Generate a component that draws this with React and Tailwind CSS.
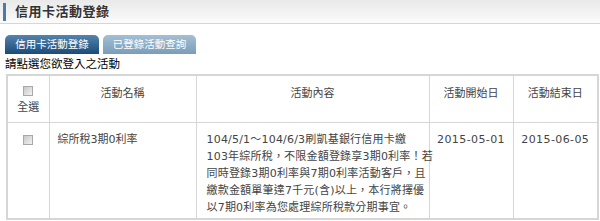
import React from 'react';

function Box() {
  return (
    <span className="inline-block w-[10px] h-[10px] border border-[#a8a8a8] bg-gradient-to-br from-[#c8c8c8] to-[#f2f2f2] align-middle" />
  );
}

const LINES = [
  '104/5/1～104/6/3刷凱基銀行信用卡繳',
  '103年綜所稅，不限金額登錄享3期0利率！若',
  '同時登錄3期0利率與7期0利率活動客戶，且',
  '繳款金額單筆達7千元(含)以上，本行將擇優',
  '以7期0利率為您處理綜所稅款分期事宜。',
];

export default function App() {
  return (
    <div className="w-[600px] h-[221px] bg-white overflow-hidden font-['DejaVu_Sans','Noto_Sans_CJK_TC',sans-serif]">
      {/* page title */}
      <div className="h-[24px] flex items-center border-b border-[#d6d6d6] bg-gradient-to-b from-[#e9e9e9] to-[#fbfbfb]">
        <div className="ml-[3px] w-[3px] h-[18px] bg-[#4d7ba6]" />
        <div className="ml-[9px] text-[13px] tracking-[0.5px] font-bold text-[#333]">信用卡活動登錄</div>
      </div>

      {/* tabs */}
      <div className="mt-[11px] ml-[5px] flex gap-[4px]">
        <div className="w-[94px] h-[19px] rounded-t-[5px] bg-gradient-to-b from-[#5484ad] to-[#1d4b78] flex items-center justify-center text-white text-[10.5px]">
          信用卡活動登錄
        </div>
        <div className="w-[93px] h-[19px] rounded-t-[5px] bg-gradient-to-b from-[#a3bfd3] to-[#7b9dba] flex items-center justify-center text-white text-[10.5px]">
          已登錄活動查詢
        </div>
      </div>

      <div className="ml-[5px] mt-[2px] h-[17px] leading-[17px] text-[11.5px] text-black">請點選您欲登入之活動</div>

      {/* table */}
      <table className="ml-[6px] mt-[1px] w-[591px] border-collapse table-fixed border-2 border-[#d6d6d6] text-[11px] text-[#444]">
        <colgroup>
          <col className="w-[42px]" />
          <col className="w-[147px]" />
          <col className="w-[233px]" />
          <col className="w-[84px]" />
          <col className="w-[85px]" />
        </colgroup>
        <thead>
          <tr className="h-[47px]">
            <th className="border border-[#d6d6d6] align-middle font-normal pt-[3px]">
              <div className="flex flex-col items-center gap-[5px]">
                <Box />
                <span className="leading-[14px]">全選</span>
              </div>
            </th>
            <th className="border border-[#d6d6d6] align-top font-normal pt-[10px] leading-[16px]">活動名稱</th>
            <th className="border border-[#d6d6d6] align-top font-normal pt-[10px] leading-[16px]">活動內容</th>
            <th className="border border-[#d6d6d6] align-top font-normal pt-[10px] leading-[16px]">活動開始日</th>
            <th className="border border-[#d6d6d6] align-top font-normal pt-[10px] leading-[16px]">活動結束日</th>
          </tr>
        </thead>
        <tbody>
          <tr>
            <td className="border border-[#d6d6d6] align-top text-center pt-[9px] leading-[16px]">
              <Box />
            </td>
            <td className="border border-[#d6d6d6] align-top pl-[8px] pt-[8px] leading-[17px]">綜所稅3期0利率</td>
            <td className="border border-[#d6d6d6] align-top pl-[10px] pt-[8px] pb-[2px] leading-[17px] tracking-[0.2px]">
              {LINES.map((l) => (
                <div key={l} className="whitespace-nowrap">{l}</div>
              ))}
            </td>
            <td className="border border-[#d6d6d6] align-top text-center pt-[8px] leading-[17px] tracking-[0.4px]">2015-05-01</td>
            <td className="border border-[#d6d6d6] align-top text-center pt-[8px] leading-[17px] tracking-[0.4px]">2015-06-05</td>
          </tr>
        </tbody>
      </table>
    </div>
  );
}
